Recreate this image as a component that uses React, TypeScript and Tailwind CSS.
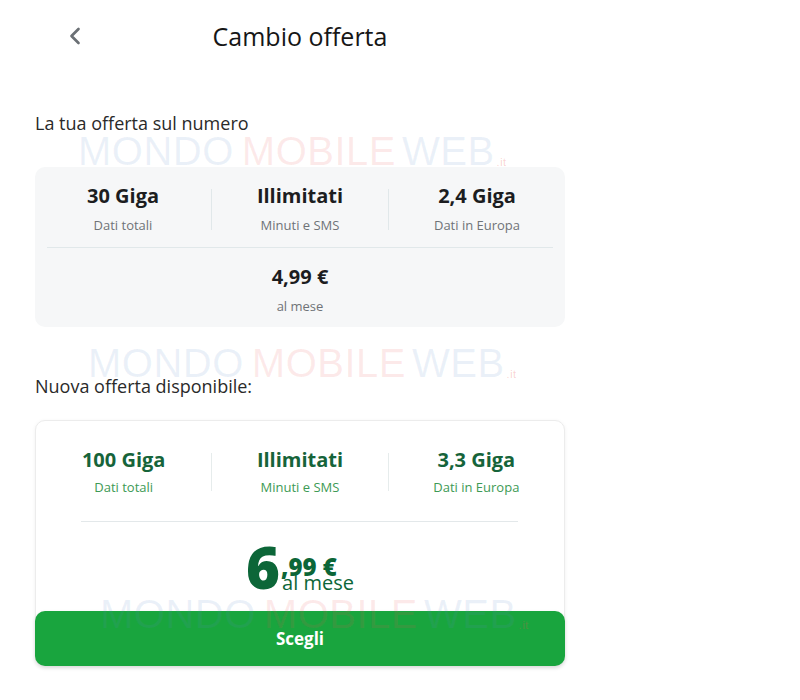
import { ChevronLeft } from "lucide-react";

const font = { fontFamily: "'Open Sans', 'Noto Sans', sans-serif" };

const currentPlan = [
  { value: "30 Giga", label: "Dati totali" },
  { value: "Illimitati", label: "Minuti e SMS" },
  { value: "2,4 Giga", label: "Dati in Europa" },
];

const newPlan = [
  { value: "100 Giga", label: "Dati totali" },
  { value: "Illimitati", label: "Minuti e SMS" },
  { value: "3,3 Giga", label: "Dati in Europa" },
];

// faint watermark laid over the screenshot
const Watermark = ({ top, left }: { top: number; left: number }) => (
  <div
    className="absolute pointer-events-none flex items-end whitespace-nowrap text-[40px] leading-none tracking-[0.5px]"
    style={{ top, left, fontFamily: "'Liberation Sans', sans-serif" }}
  >
    <span className="text-[rgba(90,140,200,0.12)]">MONDO</span>
    <span className="ml-[8px] text-[rgba(235,80,80,0.12)]">MOBILE</span>
    <span className="ml-[6px] text-[rgba(90,140,200,0.12)]">WEB</span>
    <span className="ml-[2px] mb-[3px] text-[11px] text-[rgba(235,80,80,0.25)]">.it</span>
  </div>
);

const StatsRow = ({
  items,
  valueClass,
  labelClass,
  dividerClass,
  gapClass,
}: {
  items: { value: string; label: string }[];
  valueClass: string;
  labelClass: string;
  dividerClass: string;
  gapClass: string;
}) => (
  <div className="grid grid-cols-[1fr_1px_1fr_1px_1fr] items-center">
    {items.map((item, i) => (
      <>
        {i > 0 && <div key={`d${i}`} className={dividerClass} />}
        <div key={item.label} className="flex flex-col items-center">
          <div className={valueClass}>{item.value}</div>
          <div className={`${gapClass} ${labelClass}`}>{item.label}</div>
        </div>
      </>
    ))}
  </div>
);

export default function App() {
  return (
    <div className="relative w-[800px] h-[700px] bg-white overflow-hidden" style={font}>
      <div className="ml-[35px] w-[530px]">
        {/* Header */}
        <div className="relative h-[74px] flex items-center justify-center">
          <ChevronLeft
            className="absolute left-[26px] top-[22px] w-[28px] h-[28px] text-[#6b7075]"
            strokeWidth={2.3}
          />
          <h1 className="text-[25px] font-medium text-[#161616] -mt-[1px]">Cambio offerta</h1>
        </div>

        <p className="mt-[37px] text-[18px] leading-[24px] text-[#2a2a2a]">La tua offerta sul numero</p>

        {/* Current offer */}
        <div className="mt-[32px] rounded-[10px] bg-[#f6f7f8] pt-[16px] pb-[11px]">
          <StatsRow
            items={currentPlan}
            valueClass="text-[20px] leading-[26px] font-bold text-[#1c1d1f]"
            labelClass="text-[13px] leading-[20px] text-[#6f7377]"
            dividerClass="h-[41px] w-px bg-[#e1e8ea]"
            gapClass="mt-[6px]"
          />
          <div className="mt-[12px] mx-[12px] h-px bg-[#e1e8ea]" />
          <div className="mt-[16px] flex flex-col items-center">
            <div className="text-[20px] leading-[26px] font-bold text-[#1c1d1f]">4,99 €</div>
            <div className="mt-[6px] text-[13px] leading-[20px] text-[#6f7377]">al mese</div>
          </div>
        </div>

        <p className="mt-[47px] text-[18px] leading-[24px] text-[#2a2a2a]">Nuova offerta disponibile:</p>

        {/* New offer */}
        <div className="mt-[22px] rounded-[10px] bg-white border border-[#ececec] shadow-[0_1px_4px_rgba(0,0,0,0.06)]">
          <div className="pt-[26px]">
            <StatsRow
              items={newPlan}
              valueClass="text-[20px] leading-[26px] font-bold text-[#16643a]"
              labelClass="text-[13px] leading-[20px] text-[#3d9a55]"
              dividerClass="h-[38px] w-px bg-[#e6ecec]"
              gapClass="mt-[4px]"
            />
          </div>
          <div className="mt-[24px] ml-[45px] mr-[46px] h-px bg-[#e3e8ea]" />
          <div className="mt-[20px] flex items-end justify-center text-[#0c6638]">
            <span className="text-[58px] leading-[50px] font-extrabold">6</span>
            <div className="flex flex-col ml-[1px]">
              <span className="text-[24px] leading-[20px] font-extrabold">,99 €</span>
              <span className="text-[20px] leading-[18px] -mt-[3px] ml-[1px]">al mese</span>
            </div>
          </div>
          <button className="mt-[19px] -mx-px -mb-px w-[calc(100%+2px)] h-[55px] rounded-[10px] bg-[#19a53e] text-white text-[17px] font-bold shadow-[0_2px_4px_rgba(0,0,0,0.12)]">
            Scegli
          </button>
        </div>
      </div>

      <Watermark top={131} left={78} />
      <Watermark top={343} left={88} />
      <Watermark top={594} left={100} />
    </div>
  );
}
